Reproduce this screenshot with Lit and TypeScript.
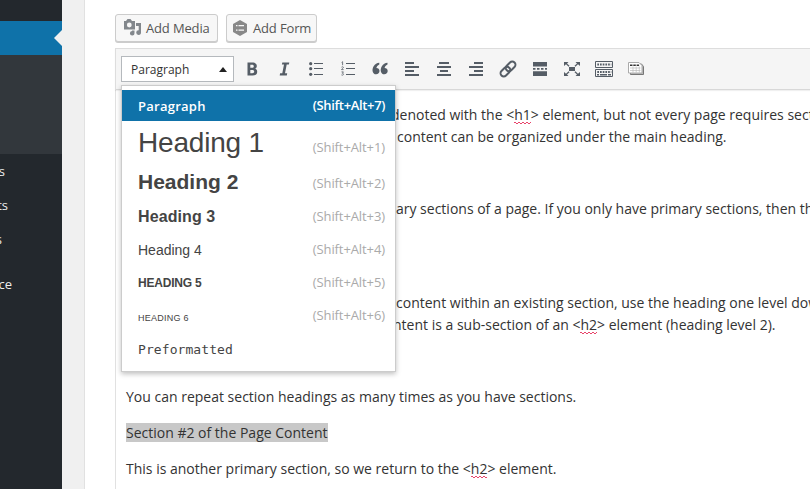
import { LitElement, html, css, svg } from "lit";
import { customElement } from "lit/decorators.js";

const icon = (body: unknown) => html`<svg width="20" height="20" viewBox="0 0 20 20">${body}</svg>`;

const bars = (rows: number[][]) => svg`${rows.map(([x, y, w]) => svg`<rect x=${x} y=${y} width=${w} height="2"/>`)}`;

const TOOLS = [
  svg`<path fill-rule="evenodd" d="M5.500 3.500h4.700c3 0 4.600 1.200 4.600 3.500 0 1.400-.7 2.400-1.900 2.800 1.500.3 2.300 1.300 2.300 2.900 0 2.500-1.700 3.800-4.700 3.800H5.500zM8.300 5.700v3h1.700c1.200 0 1.800-.5 1.800-1.500S11.200 5.700 10 5.700zM8.300 10.900v3.300h1.900c1.300 0 2-.6 2-1.700s-.7-1.600-2-1.600z"/>`,
  svg`<path d="M8.300 3.500h7l-.4 2.100h-2.200l-1.700 8.700h2.200l-.4 2.200H5.700l.4-2.200h2.200L10 5.600H7.900z"/>`,
  svg`<circle cx="4.700" cy="4.700" r="1.600"/><circle cx="4.700" cy="9.700" r="1.600"/><circle cx="4.700" cy="15.300" r="1.600"/><path d="M8 4h9v1H8zM8 9h9v1H8zM8 15h9v1H8z"/>`,
  svg`<path fill="none" stroke="#666d75" stroke-width=".9" d="M3.600 3.500l1-.8v3.500M3.500 8.200c.5-.6 1.900-.6 1.900.3 0 .7-1.900 1.300-1.900 2.100h2.100M3.500 12.900h1.900l-1 1.400c1.500 0 1.400 1.900 0 1.900-.5 0-.9-.2-1-.4"/><path d="M8 4h9v1H8zM8 9h9v1H8zM8 15h9v1H8z"/>`,
  svg`<path d="M9.300 3.800c-2.400.3-4.300 1.300-5.500 3.100-1.100 1.700-1.500 3.700-1.200 5.300.4 2 1.700 3.100 3.500 3.100 2 0 3.400-1.300 3.400-3.200S8.200 9 6.400 9c.3-1.400 1.200-2.500 2.900-3.400zM17.500 3.800c-2.400.3-4.300 1.300-5.500 3.100-1.100 1.700-1.500 3.700-1.200 5.300.4 2 1.700 3.100 3.500 3.100 2 0 3.400-1.300 3.400-3.200S16.400 9 14.600 9c.3-1.400 1.200-2.500 2.900-3.400z"/>`,
  bars([[3, 3, 9], [3, 7, 14], [3, 11, 9], [3, 15, 14]]),
  bars([[5, 3, 10], [3, 7, 14], [6, 11, 8], [3, 15, 14]]),
  bars([[8, 3, 9], [3, 7, 14], [8, 11, 9], [3, 15, 14]]),
  svg`<g fill="none" stroke="#555d66" stroke-width="2" transform="rotate(-45 10 10)"><rect x=".8" y="6.800" width="11" height="6.400" rx="3.200"/><rect x="8.200" y="6.800" width="11" height="6.400" rx="3.200"/></g>`,
  svg`<path d="M3 3h14v4.500H3zM3 9h2.500v1.700H3zM7 9h2.500v1.700H7zM11 9h2.500v1.700H11zM15 9h2v1.700h-2zM3 12.300h14V17H3z"/>`,
  svg`<path d="M7 8h6v4H7zM2 3h4.500L5 4.500l2.500 2.300-.9.900L4 5.300 2 7zM18 3h-4.500L15 4.500l-2.500 2.300.9.900L16 5.300 18 7zM2 17h4.500L5 15.500l2.500-2.300-.9-.9L4 14.700 2 13zM18 17h-4.500l1.500-1.500-2.500-2.300.9-.9 2.600 2.400L18 13z"/>`,
  svg`<path fill="none" stroke="#555d66" d="M1.500 2.500h17v6h-17zM1.500 10.500h17v7h-17z"/><path fill="none" stroke="#555d66" stroke-width="2" stroke-dasharray="1.700 1" d="M3.300 5.500h14M3.300 13h14"/><path d="M3 15h2v1.500H3zM6 15h7v1.500H6zM14 15h3v1.500h-3z"/>`,
  svg`<path fill="#bbb" stroke="#777" d="M4.500 5h11l2 2.500v8h-13z"/><path fill="#fff" stroke="#aaa" d="M2.500 3.500h10.500l3 3v7.500H2.500z"/><path fill="#333" d="M4 5.500h2.500V7H4zM7.300 5.500h2.500V7H7.300zM10.600 5.500h2.500V7h-2.500z"/><path fill="none" stroke="#bbb" stroke-width=".7" d="M4 9h10.500M4 11.500h10.500M7 7.500v6M10.200 7.500v6M13.300 7.500v6"/>`,
];

const FORMATS = [
  ["Paragraph", "p", "7"],
  ["Heading 1", "h1", "1"],
  ["Heading 2", "h2", "2"],
  ["Heading 3", "h3", "3"],
  ["Heading 4", "h4", "4"],
  ["HEADING 5", "h5", "5"],
  ["HEADING 6", "h6", "6"],
  ["Preformatted", "pre", ""],
];

@customElement("app-root")
export class AppRoot extends LitElement {
  static styles = css`
    :host { display: flex; width: 810px; height: 489px; overflow: hidden; background: #f0f0f0; font-family: "Open Sans", "Noto Sans", sans-serif; color: #333; }
    * { box-sizing: border-box; }
    svg { display: block; fill: #555d66; }
    .side { width: 62px; flex: none; background: #23282d; color: #eee; line-height: 20px; }
    .top { height: 21px; }
    .current { height: 34px; background: #0f72a9; display: flex; align-items: center; justify-content: flex-end; }
    .arrow { border: 8px solid transparent; border-left: 0; border-right-color: #f0f0f0; }
    .sub { height: 99px; background: #32373c; }
    .labels { display: grid; grid-template-rows: 34px 34px 34px 56px; }
    .label { display: flex; align-items: center; justify-content: flex-end; font-size: 13px; }
    .main { margin-left: 22px; flex: none; width: 726px; background: #fff; border-left: 1px solid #e1e1e1; padding: 14px 0 0 30px; display: flex; flex-direction: column; }
    .media { display: flex; gap: 8px; height: 28px; margin-bottom: 6px; }
    .btn { height: 28px; border: 1px solid #ccc; border-radius: 3px; background: #f7f7f7; box-shadow: 0 1px 0 #ccc; display: flex; align-items: center; gap: 3px; padding: 0 0 1px 7px; color: #555; font-size: 13px; white-space: nowrap; letter-spacing: -.15px; }
    .b1 { width: 103px; } .b2 { width: 91px; padding-left: 5px; gap: 5px; }
    .editor { flex: 1; border-left: 1px solid #e1e1e1; display: flex; flex-direction: column; }
    .bar { height: 42px; flex: none; margin-left: -1px; background: #f5f5f5; border: 1px solid #ddd; border-right: 0; border-bottom: 1px solid #d8d8d8; box-shadow: 0 1px 1px rgba(0,0,0,.06); display: flex; align-items: center; padding-left: 5px; }
    .pick { position: relative; width: 113px; height: 26px; margin-right: 2px; border: 1px solid #b5b9bd; background: #fff; display: flex; align-items: center; justify-content: space-between; padding: 0 6px 0 9px; font-size: 12px; }
    .caret { border: 4px solid transparent; border-top: 0; border-bottom: 5px solid #222; }
    .tool { width: 32px; display: flex; justify-content: center; }
    .menu { position: absolute; z-index: 2; left: -1px; top: 28px; width: 275px; height: 287px; background: #fff; border: 1px solid #ccc; box-shadow: 0 2px 5px rgba(0,0,0,.25); padding-top: 4px; display: grid; grid-template-rows: 31px 43px 36px 33px 33px 33px 34px 33px; color: #444; }
    .item { display: flex; align-items: center; justify-content: space-between; padding: 0 10px 0 16px; font-family: "Liberation Sans", sans-serif; white-space: nowrap; }
    .item.p { background: #0f72a9; color: #fff; }
    .name.p { font: 600 13px "Open Sans", sans-serif; letter-spacing: .25px; }
    .name.h1 { font-size: 28px; letter-spacing: -.2px; }
    .name.h2 { font-size: 21px; font-weight: bold; }
    .name.h3 { font-size: 16px; font-weight: bold; letter-spacing: .1px; }
    .name.h4 { font-size: 14px; }
    .name.h5 { font-size: 12px; font-weight: bold; letter-spacing: -.2px; }
    .name.h6 { font-size: 9px; padding-top: 3px; letter-spacing: .25px; }
    .name.pre { font: 13px "DejaVu Sans Mono", monospace; letter-spacing: .08px; }
    .key { font: 13px "Open Sans", sans-serif; color: #aaa; letter-spacing: -.1px; }
    .key.h1 { padding-top: 8px; }
    .key.h2 { padding-top: 2px; }
    .key.h3, .key.h4, .key.h5 { padding-bottom: 1px; }
    .key.h6 { padding-bottom: 2px; }
    .key.p { color: #fff; font-weight: 600; letter-spacing: -.35px; padding-bottom: 1px; }
    .doc { padding: 14px 0 0 10px; font-size: 14px; line-height: 22px; display: flex; flex-direction: column; gap: 14px; white-space: nowrap; }
    .para { display: flex; flex-direction: column; align-items: flex-start; min-height: 22px; }
    .para.two { min-height: 44px; }
    .sel { background: #c8c8c8; line-height: 19px; margin: 1px 0 2px; }
    .err {
      background-image: repeating-linear-gradient(90deg, #e8446a 0 2px, transparent 2px 4px), repeating-linear-gradient(90deg, transparent 0 2px, #e8446a 2px 4px);
      background-size: 100% 1px; background-repeat: no-repeat;
      background-position: 0 calc(100% - 1px), 0 calc(100% - 0px);
    }
    .l1 { margin-left: 265px; } .l2 { margin-left: 271px; } .l3 { margin-left: 257px; }
    .l4 { margin-left: 270px; } .l5 { margin-left: 267px; }
  `;

  render() {
    return html`
      <div class="side">
        <div class="top"></div>
        <div class="current"><span class="arrow"></span></div>
        <div class="sub"></div>
        <div class="labels">
          ${["s", "ts", "s", "ce"].map((t, i) => html`<div class="label" style="width:${[5, 8, 2, 12][i]}px">${t}</div>`)}
        </div>
      </div>
      <div class="main">
        <div class="media">
          <div class="btn b1"><svg width="20" height="19" viewBox="0 0 20 19"><path fill="#82878c" fill-rule="evenodd" d="M1 3h2l1.500-2h3L9 3h3v8.500H1zM6.300 4.600a2.400 2.400 0 1 0 0 4.800 2.400 2.400 0 0 0 0-4.800zM13 5h5v9.500a2.400 2.400 0 1 1-2.300-2.300V8H13zM9 12.500h2.500v2.700A2.300 2.300 0 1 1 9 13z"/></svg>Add Media</div>
          <div class="btn b2"><svg width="16" height="18" viewBox="0 0 16 18"><path fill="#888" d="M8 1l7 4v8l-7 4-7-4V5z"/><path fill="#f7f7f7" d="M4 6h1.500v1.200H4zM6.500 6H12v1.200H6.500zM4 10.500h1.500v1.200H4zM6.500 10.500H12v1.200H6.500z"/></svg>Add Form</div>
        </div>
        <div class="editor">
          <div class="bar">
            <div class="pick">Paragraph<span class="caret"></span>
              <div class="menu">
                ${FORMATS.map(([n, c, k]) => html`<div class="item ${c}"><span class="name ${c}">${n}</span>${k ? html`<span class="key ${c}">(Shift+Alt+${k})</span>` : ""}</div>`)}
              </div>
            </div>
            ${TOOLS.map((t) => html`<span class="tool">${icon(t)}</span>`)}
          </div>
          <div class="doc">
            <div class="para"><span class="l1">denoted with the &lt;<span class="err">h1</span>&gt; element, but not every page requires section</span><span class="l2">content can be organized under the main heading.</span></div>
            <div class="para"></div>
            <div class="para two"><span class="l3">mary sections of a page. If you only have primary sections, then the</span></div>
            <div class="para"></div>
            <div class="para"><span class="l4">content within an existing section, use the heading one level down</span><span class="l5">ntent is a sub-section of an &lt;<span class="err">h2</span>&gt; element (heading level 2).</span></div>
            <div class="para"></div>
            <div class="para"><span>You can repeat section headings as many times as you have sections.</span></div>
            <div class="para"><span class="sel">Section #2 of the Page Content</span></div>
            <div class="para"><span>This is another primary section, so we return to the &lt;<span class="err">h2</span>&gt; element.</span></div>
          </div>
        </div>
      </div>`;
  }
}
